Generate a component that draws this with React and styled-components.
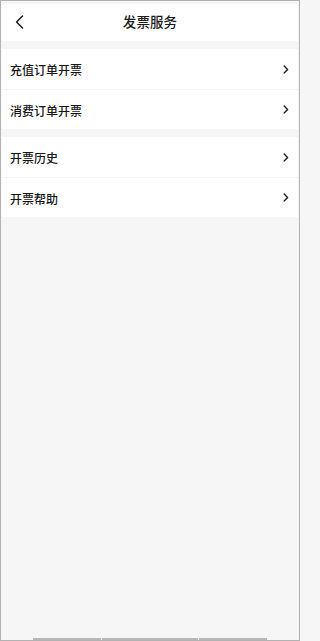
import React from "react";
import styled, { createGlobalStyle } from "styled-components";

const GlobalStyle = createGlobalStyle`
  html, body { margin: 0; padding: 0; }
  body {
    background: #f6f6f6;
    font-family: "Noto Sans CJK SC", "Noto Sans", sans-serif;
    -webkit-font-smoothing: antialiased;
  }
`;

const Frame = styled.div`
  box-sizing: border-box;
  width: 300px;
  height: 641px;
  border: 1px solid #b2b2b2;
  padding: 3px 1px 0;
  background: #f6f6f6;
  display: flex;
  flex-direction: column;
`;

const Header = styled.header`
  height: 37px;
  background: #fff;
  display: grid;
  grid-template-columns: 1fr auto 1fr;
  align-items: center;
`;

const BackButton = styled.button`
  all: unset;
  justify-self: start;
  display: flex;
  padding: 0 0 2px 13px;
  cursor: pointer;
`;

const Title = styled.h1`
  margin: 0;
  font-size: 13.5px;
  font-weight: 500;
  color: #1a1a1a;
  letter-spacing: 0.1px;
  padding-bottom: 3px;
`;

const Group = styled.section`
  margin-top: 8px;
  background: #fff;
`;

const Row = styled.div`
  height: 40px;
  display: flex;
  align-items: center;
  justify-content: space-between;
  padding: 0 9px 0 8px;
  cursor: pointer;

  & + & {
    border-top: 1px solid #f3f3f3;
    height: 39px;
  }
`;

const Label = styled.span`
  font-size: 12px;
  font-weight: 500;
  color: #161616;
  padding-top: 1px;
`;

const Spacer = styled.div`
  flex: 1;
`;

const HomeBar = styled.div`
  display: flex;
  gap: 1px;
  padding: 0 31px;
`;

const HomeSegment = styled.span`
  height: 2px;
  background: #b8b8b8;
  flex: ${(p) => p.$grow};
`;

const Chevron = () => (
  <svg width="6" height="9" viewBox="0 0 6 9" fill="none">
    <path d="M1.2 1 L4.6 4.5 L1.2 8" stroke="#222" strokeWidth="1.4" strokeLinecap="round" strokeLinejoin="round" />
  </svg>
);

const BackIcon = () => (
  <svg width="9" height="14" viewBox="0 0 9 14" fill="none">
    <path d="M7.5 1 L1.6 7 L7.5 13" stroke="#1a1a1a" strokeWidth="1.5" strokeLinecap="round" strokeLinejoin="round" />
  </svg>
);

const groups = [
  ["充值订单开票", "消费订单开票"],
  ["开票历史", "开票帮助"],
];

export default function App() {
  return (
    <>
      <GlobalStyle />
      <Frame>
        <Header>
          <BackButton aria-label="返回">
            <BackIcon />
          </BackButton>
          <Title>发票服务</Title>
          <span />
        </Header>
        {groups.map((items, i) => (
          <Group key={i}>
            {items.map((label) => (
              <Row key={label}>
                <Label>{label}</Label>
                <Chevron />
              </Row>
            ))}
          </Group>
        ))}
        <Spacer />
        <HomeBar>
          <HomeSegment $grow={68} />
          <HomeSegment $grow={95} />
          <HomeSegment $grow={68} />
        </HomeBar>
      </Frame>
    </>
  );
}
